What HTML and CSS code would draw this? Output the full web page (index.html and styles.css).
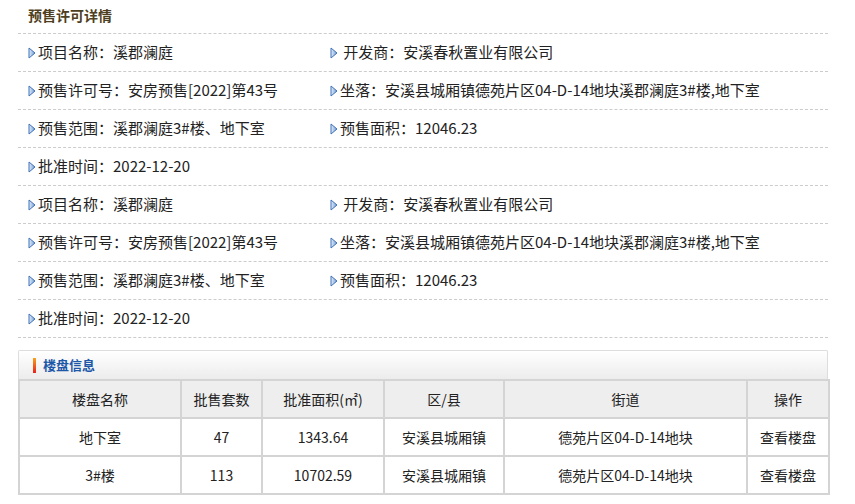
FILE: index.html
```html
<!DOCTYPE html>
<html lang="zh-CN">
<head>
    <meta charset="UTF-8">
    <title>预售许可详情</title>
    <link rel="stylesheet" href="styles.css">
</head>
<body>
    <svg width="0" height="0" style="position:absolute">
        <defs>
            <linearGradient id="arrowFill" x1="0" y1="0" x2="1" y2="0">
                <stop offset="0" stop-color="#e4eefa"/>
                <stop offset="1" stop-color="#6f9bd6"/>
            </linearGradient>
        </defs>
    </svg>
    <div class="container">
        <div class="title">预售许可详情</div>

        <div class="row">
            <div class="cell"><svg class="arrow" viewBox="0 0 8 12"><polygon points="1,1 7,6 1,11" fill="url(#arrowFill)" stroke="#3f72b8" stroke-width="1"/></svg>项目名称：溪郡澜庭</div>
            <div class="cell"><svg class="arrow" viewBox="0 0 8 12"><polygon points="1,1 7,6 1,11" fill="url(#arrowFill)" stroke="#3f72b8" stroke-width="1"/></svg>&nbsp;开发商：安溪春秋置业有限公司</div>
        </div>
        <div class="row">
            <div class="cell"><svg class="arrow" viewBox="0 0 8 12"><polygon points="1,1 7,6 1,11" fill="url(#arrowFill)" stroke="#3f72b8" stroke-width="1"/></svg>预售许可号：安房预售[2022]第43号</div>
            <div class="cell"><svg class="arrow" viewBox="0 0 8 12"><polygon points="1,1 7,6 1,11" fill="url(#arrowFill)" stroke="#3f72b8" stroke-width="1"/></svg>坐落：安溪县城厢镇德苑片区04-D-14地块溪郡澜庭3#楼,地下室</div>
        </div>
        <div class="row">
            <div class="cell"><svg class="arrow" viewBox="0 0 8 12"><polygon points="1,1 7,6 1,11" fill="url(#arrowFill)" stroke="#3f72b8" stroke-width="1"/></svg>预售范围：溪郡澜庭3#楼、地下室</div>
            <div class="cell"><svg class="arrow" viewBox="0 0 8 12"><polygon points="1,1 7,6 1,11" fill="url(#arrowFill)" stroke="#3f72b8" stroke-width="1"/></svg>预售面积：12046.23</div>
        </div>
        <div class="row">
            <div class="cell"><svg class="arrow" viewBox="0 0 8 12"><polygon points="1,1 7,6 1,11" fill="url(#arrowFill)" stroke="#3f72b8" stroke-width="1"/></svg>批准时间：2022-12-20</div>
        </div>

        <div class="row">
            <div class="cell"><svg class="arrow" viewBox="0 0 8 12"><polygon points="1,1 7,6 1,11" fill="url(#arrowFill)" stroke="#3f72b8" stroke-width="1"/></svg>项目名称：溪郡澜庭</div>
            <div class="cell"><svg class="arrow" viewBox="0 0 8 12"><polygon points="1,1 7,6 1,11" fill="url(#arrowFill)" stroke="#3f72b8" stroke-width="1"/></svg>&nbsp;开发商：安溪春秋置业有限公司</div>
        </div>
        <div class="row">
            <div class="cell"><svg class="arrow" viewBox="0 0 8 12"><polygon points="1,1 7,6 1,11" fill="url(#arrowFill)" stroke="#3f72b8" stroke-width="1"/></svg>预售许可号：安房预售[2022]第43号</div>
            <div class="cell"><svg class="arrow" viewBox="0 0 8 12"><polygon points="1,1 7,6 1,11" fill="url(#arrowFill)" stroke="#3f72b8" stroke-width="1"/></svg>坐落：安溪县城厢镇德苑片区04-D-14地块溪郡澜庭3#楼,地下室</div>
        </div>
        <div class="row">
            <div class="cell"><svg class="arrow" viewBox="0 0 8 12"><polygon points="1,1 7,6 1,11" fill="url(#arrowFill)" stroke="#3f72b8" stroke-width="1"/></svg>预售范围：溪郡澜庭3#楼、地下室</div>
            <div class="cell"><svg class="arrow" viewBox="0 0 8 12"><polygon points="1,1 7,6 1,11" fill="url(#arrowFill)" stroke="#3f72b8" stroke-width="1"/></svg>预售面积：12046.23</div>
        </div>
        <div class="row">
            <div class="cell"><svg class="arrow" viewBox="0 0 8 12"><polygon points="1,1 7,6 1,11" fill="url(#arrowFill)" stroke="#3f72b8" stroke-width="1"/></svg>批准时间：2022-12-20</div>
        </div>

        <div class="panel">
            <div class="panel-head"><span class="mark"></span>楼盘信息</div>
            <table class="list">
                <colgroup>
                    <col style="width:162px">
                    <col style="width:81px">
                    <col style="width:122px">
                    <col style="width:120px">
                    <col style="width:243px">
                    <col style="width:82px">
                </colgroup>
                <thead>
                    <tr>
                        <th>楼盘名称</th>
                        <th>批售套数</th>
                        <th>批准面积(㎡)</th>
                        <th>区/县</th>
                        <th>街道</th>
                        <th>操作</th>
                    </tr>
                </thead>
                <tbody>
                    <tr>
                        <td>地下室</td>
                        <td>47</td>
                        <td>1343.64</td>
                        <td>安溪县城厢镇</td>
                        <td>德苑片区04-D-14地块</td>
                        <td><a href="#">查看楼盘</a></td>
                    </tr>
                    <tr>
                        <td>3#楼</td>
                        <td>113</td>
                        <td>10702.59</td>
                        <td>安溪县城厢镇</td>
                        <td>德苑片区04-D-14地块</td>
                        <td><a href="#">查看楼盘</a></td>
                    </tr>
                </tbody>
            </table>
        </div>
    </div>
</body>
</html>
```

FILE: styles.css
```css
body {
    margin: 0;
    padding: 0 27px 0 18px;
    background: #fff;
    font-family: "Microsoft YaHei", "Noto Sans CJK SC", "Noto Sans", sans-serif;
    font-size: 15px;
    color: #222;
}

.container {
    width: 810px;
}

.title {
    height: 33px;
    line-height: 30px;
    padding-left: 10px;
    font-size: 14px;
    font-weight: bold;
    color: #4f3f22;
    border-bottom: 1px dashed #ccc;
}

.row {
    display: flex;
    height: 37px;
    line-height: 36px;
    padding-left: 10px;
    border-bottom: 1px dashed #ccc;
}

.cell {
    white-space: nowrap;
}

.cell:first-child {
    width: 302px;
}

.arrow {
    width: 8px;
    height: 12px;
    margin-right: 2px;
    vertical-align: -1px;
}

.panel {
    margin-top: 12px;
}

.panel-head {
    height: 28px;
    line-height: 28px;
    padding-left: 14px;
    border: 1px solid #ddd;
    border-bottom: none;
    border-radius: 2px 2px 0 0;
    background: linear-gradient(#ffffff, #ececec);
    color: #1d58a8;
    font-size: 13px;
    font-weight: bold;
}

.mark {
    display: inline-block;
    width: 3px;
    height: 15px;
    margin-right: 7px;
    vertical-align: -3px;
    background: linear-gradient(#f7a21c, #e8201c);
}

.list {
    width: 810px;
    table-layout: fixed;
    border-collapse: collapse;
    font-size: 14px;
    color: #222;
}

.list th,
.list td {
    height: 36px;
    padding: 0;
    text-align: center;
    border: 2px solid #d4d4d4;
}

.list th {
    font-weight: normal;
    background: #eee;
}

.list a {
    color: #222;
    text-decoration: none;
}
```
